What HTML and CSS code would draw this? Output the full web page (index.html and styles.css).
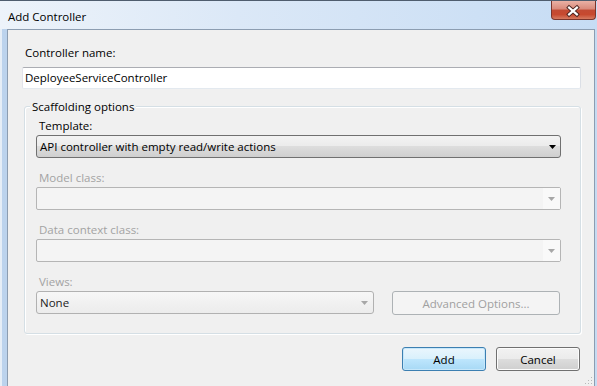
FILE: index.html
```html
<!DOCTYPE html>
<html lang="en">
<head>
    <meta charset="UTF-8">
    <title>Add Controller</title>
    <link rel="stylesheet" href="styles.css">
</head>
<body>
    <div class="window">
        <div class="titlebar">
            <span class="title">Add Controller</span>
            <div class="close-btn">
                <svg width="45" height="19" viewBox="0 0 45 19">
                    <path d="M18.5 6.5 L26.5 13.5 M26.5 6.5 L18.5 13.5" stroke="#4a2420" stroke-width="4.2" stroke-linecap="square" fill="none"/>
                    <path d="M18.5 6.5 L26.5 13.5 M26.5 6.5 L18.5 13.5" stroke="#ffffff" stroke-width="2.2" stroke-linecap="square" fill="none"/>
                </svg>
            </div>
        </div>

        <div class="client">
            <div class="label">Controller name:</div>
            <div class="textbox">DeployeeServiceController</div>

            <fieldset class="group">
                <legend>Scaffolding options</legend>

                <div class="field-label">Template:</div>
                <div class="combo combo-list">
                    <span class="combo-text">API controller with empty read/write actions</span>
                    <svg class="arrow" width="7" height="4" viewBox="0 0 7 4"><polygon points="0,0 7,0 3.5,4" fill="#000"/></svg>
                </div>

                <div class="field-label disabled">Model class:</div>
                <div class="combo combo-off">
                    <span class="combo-text"></span>
                    <span class="drop"><svg width="7" height="4" viewBox="0 0 7 4"><polygon points="0,0 7,0 3.5,4" fill="#a7a7a7"/></svg></span>
                </div>

                <div class="field-label disabled">Data context class:</div>
                <div class="combo combo-off">
                    <span class="combo-text"></span>
                    <span class="drop"><svg width="7" height="4" viewBox="0 0 7 4"><polygon points="0,0 7,0 3.5,4" fill="#a7a7a7"/></svg></span>
                </div>

                <div class="field-label disabled">Views:</div>
                <div class="row">
                    <div class="combo combo-views">
                        <span class="combo-text">None</span>
                        <svg class="arrow" width="7" height="4" viewBox="0 0 7 4"><polygon points="0,0 7,0 3.5,4" fill="#a7a7a7"/></svg>
                    </div>
                    <div class="btn btn-off">Advanced Options...</div>
                </div>
            </fieldset>

            <div class="actions">
                <div class="btn btn-default">Add</div>
                <div class="btn">Cancel</div>
            </div>

            <svg class="grip" width="8" height="8" viewBox="0 0 8 8">
                <rect x="6" y="0" width="1" height="1" fill="#b8b8b8"/>
                <rect x="3" y="3" width="1" height="1" fill="#b8b8b8"/>
                <rect x="6" y="3" width="1" height="1" fill="#b8b8b8"/>
                <rect x="0" y="6" width="1" height="1" fill="#b8b8b8"/>
                <rect x="3" y="6" width="1" height="1" fill="#b8b8b8"/>
                <rect x="6" y="6" width="1" height="1" fill="#b8b8b8"/>
            </svg>
        </div>
    </div>
</body>
</html>
```

FILE: styles.css
```css
body {
    margin: 0;
    font-family: "Open Sans", "Noto Sans", sans-serif;
    font-size: 11.5px;
    color: #000;
}
.window {
    width: 597px;
    height: 386px;
    box-sizing: border-box;
    border-top: 1px solid #4f5d6e;
    background: linear-gradient(to right, #e6eef7 0, #e6eef7 2px, #bcd3ed 2px, #c6dbf2 100%);
    display: flex;
    flex-direction: column;
    overflow: hidden;
}
.titlebar {
    height: 28px;
    flex: none;
    display: flex;
    justify-content: space-between;
    align-items: center;
    padding-left: 8px;
    background: linear-gradient(to right, #edf3fa 0%, #dbe8f7 40%, #c6dcf4 100%);
}
.title {
    line-height: 15px;
    margin-top: 2px;
}
.close-btn {
    align-self: flex-start;
    width: 45px;
    height: 19px;
    margin-right: 1px;
    box-sizing: border-box;
    border: 1px solid #7a352c;
    border-top: none;
    border-radius: 0 0 4px 4px;
    background: linear-gradient(to bottom, #eab1a5 0%, #d9897a 45%, #c24a33 50%, #c7492f 75%, #d67a60 100%);
    display: flex;
    align-items: center;
    justify-content: center;
}
.close-btn svg {
    display: block;
    margin-left: -1px;
}
.client {
    flex: 1;
    position: relative;
    margin: 0 2px 0 7px;
    border: 1px solid #8c9db1;
    border-bottom: none;
    background: #f0f0f0;
    padding: 15px 13px 0 14px;
}
.label {
    line-height: 15px;
    margin-left: 3px;
}
.textbox {
    margin-top: 7px;
    height: 22px;
    box-sizing: border-box;
    line-height: 20px;
    padding-left: 2px;
    background: #fff;
    border: 1px solid;
    border-color: #abadb3 #dbdfe6 #e3e9ef #e2e3ea;
    border-radius: 2px;
}
.group {
    margin: 10px 0 0 2px;
    padding: 4px 19px 18px 11px;
    min-width: 0;
    border: 1px solid #d5dfe5;
    border-radius: 3px;
    box-shadow: inset 1px 1px 0 #fff, 1px 1px 0 #fff;
}
.group legend {
    padding: 0 2px;
    margin-left: -6px;
    line-height: 15px;
    background: #f0f0f0;
}
.field-label {
    line-height: 15px;
    margin: 0 0 2px 3px;
}
.field-label.disabled {
    color: #a3a3a3;
}
.combo {
    height: 23px;
    box-sizing: border-box;
    border: 1px solid #707070;
    border-radius: 3px;
    margin-bottom: 12px;
    display: flex;
    align-items: center;
}
.combo-text {
    flex: 1;
    padding-left: 3px;
    white-space: nowrap;
}
.combo .arrow {
    margin-right: 4px;
}
.combo-list {
    background: linear-gradient(to bottom, #f3f3f3 0%, #ebebeb 50%, #dddddd 50%, #cfcfcf 100%);
}
.combo-off {
    border-color: #b5b5b5;
    border-radius: 2px;
    background: #f4f4f4;
    height: 23px;
}
.combo-off .drop {
    width: 17px;
    align-self: stretch;
    background: #f9f9f9;
    display: flex;
    align-items: center;
    justify-content: center;
}
.row {
    display: flex;
    gap: 18px;
}
.row .combo {
    margin-bottom: 0;
}
.combo-views {
    width: 338px;
    border-color: #b1b1b1;
    background: linear-gradient(to bottom, #f7f7f7 0%, #f1f1f1 50%, #ececec 100%);
    color: #222;
}
.combo-views .arrow {
    margin-right: 5px;
}
.btn {
    width: 84px;
    height: 24px;
    box-sizing: border-box;
    border: 1px solid #707070;
    border-radius: 3px;
    display: flex;
    align-items: center;
    justify-content: center;
    background: linear-gradient(to bottom, #f2f2f2 0%, #ebebeb 50%, #dddddd 50%, #cfcfcf 100%);
    box-shadow: inset 0 0 0 1px #fcfcfc;
}
.btn-off {
    width: 168px;
    border-color: #adb2b5;
    background: #f4f4f4;
    box-shadow: none;
    color: #a0a0a0;
}
.btn-default {
    border-color: #3c7fb1;
    background: linear-gradient(to bottom, #eaf6fd 0%, #d9f0fc 50%, #bee6fd 50%, #a7d9f5 100%);
    box-shadow: inset 0 0 0 1px #c6e7fa;
}
.actions {
    display: flex;
    justify-content: flex-end;
    gap: 10px;
    margin: 13px 1px 0 0;
}
.grip {
    position: absolute;
    right: 1px;
    bottom: 1px;
}
```
